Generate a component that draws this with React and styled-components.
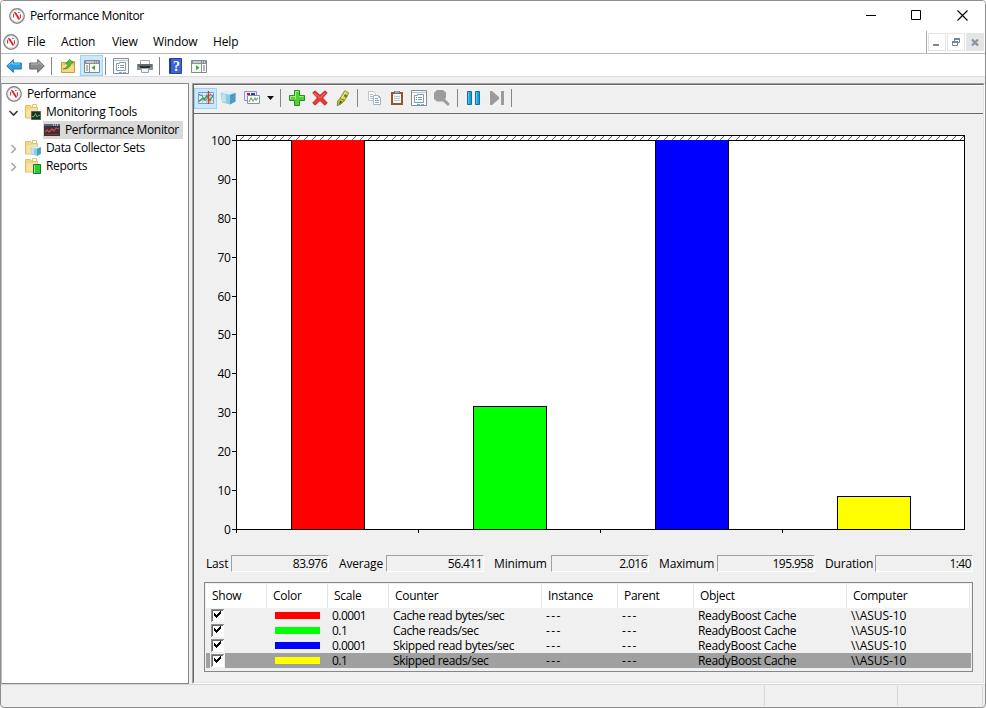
import React from "react";
import styled, { createGlobalStyle } from "styled-components";

const GlobalStyle = createGlobalStyle`
  * { box-sizing: border-box; }
  body {
    margin: 0;
    background: #fff;
    overflow: hidden;
  }
`;

const Window = styled.div`
  width: 986px;
  height: 708px;
  display: flex;
  flex-direction: column;
  border: 1px solid #8e8e90;
  border-radius: 4px;
  background: #f0f0f0;
  color: #000;
  font: 12px/18px "Open Sans", "Noto Sans", sans-serif;
  letter-spacing: -0.16px;
  overflow: hidden;
  white-space: nowrap;
  cursor: default;
`;

const TitleBar = styled.header`
  display: flex;
  align-items: center;
  height: 30px;
  padding-left: 8px;
  background: #fff;
`;

const Title = styled.span`
  flex: 1;
  margin-left: 5px;
  letter-spacing: -0.35px;
`;

const WindowControl = styled.div`
  display: flex;
  align-items: center;
  justify-content: center;
  width: 45px;
  height: 30px;
  padding: 0 ${(p) => p.$shift || 0}px 2px 0;
`;

const MenuBar = styled.nav`
  display: flex;
  align-items: center;
  height: 23px;
  padding-left: 2px;
  background: #fff;
  border-bottom: 1px solid #b9b9c1;
`;

const MenuItem = styled.span`
  width: ${(p) => p.$width}px;
`;

const MdiControls = styled.div`
  display: flex;
  align-items: center;
  gap: 1px;
  height: 22px;
  margin-left: auto;
  padding: 0 1px;
  border-left: 1px solid #a9a9ae;
`;

const MdiButton = styled.div`
  width: 18px;
  height: 18px;
  border: 1px solid #e5e5e5;
  background: ${(p) => (p.$filled ? "#e5e5e5" : "#fff")};
  svg { display: block; }
`;

const MainToolbar = styled.div`
  display: flex;
  align-items: center;
  height: 23px;
  padding: 1px 0 0 5px;
  background: #fff;
  border-bottom: 1px solid #dcdcdc;
`;

const ToolButton = styled.div`
  display: flex;
  align-items: center;
  justify-content: center;
  width: ${(p) => (p.$active ? 23 : 16)}px;
  height: ${(p) => (p.$active ? 21 : 18)}px;
  margin-left: ${(p) => p.$gap || 0}px;
  flex: none;
  ${(p) => p.$active && "background: #cce8ff; border: 1px solid #99d1ff;"}
`;

const Separator = styled.div`
  width: 1px;
  height: 18px;
  margin-left: ${(p) => p.$gap}px;
  background: #858585;
`;

const Body = styled.div`
  display: flex;
  height: 607px;
  padding-top: 6px;
`;

const Tree = styled.aside`
  width: 188px;
  height: 601px;
  padding-top: 1px;
  background: #fff;
  border: 1px solid #828790;
  border-left-color: #b9bcc1;
`;

const TreeRow = styled.div`
  display: flex;
  align-items: center;
  height: 18px;
  padding-left: ${(p) => p.$indent}px;
`;

const TreeLabel = styled.div`
  display: flex;
  align-items: center;
  gap: 5px;
  height: 18px;
  padding: 0 4px 0 1px;
  letter-spacing: ${(p) => p.$spacing || -0.35}px;
  background: ${(p) => (p.$selected ? "#d9d9d9" : "transparent")};
`;

const Expander = styled.div`
  display: flex;
  justify-content: center;
  width: 10px;
  margin-right: 6px;
`;

const Pane = styled.main`
  display: flex;
  flex-direction: column;
  width: 793px;
  height: 601px;
  margin-left: 3px;
  border: 1px solid;
  border-color: #a0a0a0 #fff #fff #a0a0a0;
`;

const PaneInner = styled.div`
  flex: 1;
  border: 1px solid;
  border-color: #696969 #e3e3e3 #e3e3e3 #696969;
`;

const PaneToolbar = styled.div`
  display: flex;
  align-items: center;
  height: 29px;
  padding-bottom: 3px;
  border-top: 1px solid #fff;
  border-bottom: 1px solid #696969;
`;

const ChartSvg = styled.svg`
  display: block;
  text {
    font-size: 12px;
    text-anchor: end;
    letter-spacing: -0.4px;
  }
`;

const Stats = styled.div`
  display: flex;
  align-items: center;
  height: 17px;
  padding-left: 12px;
`;

const StatLabel = styled.span`
  width: ${(p) => p.$width}px;
`;

const StatValue = styled.span`
  width: 98px;
  height: 17px;
  margin-right: ${(p) => p.$after}px;
  padding-right: 1px;
  line-height: 16px;
  text-align: right;
  letter-spacing: -0.55px;
  border: 1px solid;
  border-color: #a0a0a0 #fff #fff #a0a0a0;
`;

const Counters = styled.div`
  width: 769px;
  height: 90px;
  margin: 10px 0 0 10px;
  padding: 1px;
  border: 1px solid #828790;
`;

const columns = "61px 61px 61px 153px 76px 76px 153px 123px";

const CounterHeader = styled.div`
  display: grid;
  grid-template-columns: ${columns};
  width: 765px;
  height: 24px;
  background: #fff;
`;

const HeaderCell = styled.div`
  padding-left: 6px;
  line-height: 24px;
  letter-spacing: -0.28px;
  border-right: 1px solid #e5e5e5;
`;

const CounterRow = styled.div`
  display: grid;
  grid-template-columns: ${columns};
  align-items: center;
  width: 765px;
  height: 15px;
  line-height: 15px;
  background: ${(p) => (p.$selected ? "#a0a0a0" : "transparent")};
`;

const Cell = styled.div`
  padding-left: 4px;
  letter-spacing: ${(p) => p.$spacing || 0}px;
`;

const CheckCell = styled.div`
  display: flex;
  width: 15px;
  height: 15px;
  margin-left: 4px;
  background: #f0f0f0;
`;

const Swatch = styled.div`
  width: 45px;
  height: 7px;
  margin-left: 8px;
  background: ${(p) => p.$color};
`;

const StatusBar = styled.footer`
  display: flex;
  height: 23px;
  padding-top: 1px;
  border-top: 1px solid #d7d7d7;
`;

const StatusCell = styled.div`
  width: ${(p) => p.$width}px;
  height: 20px;
  border-right: 1px solid #d7d7d7;
`;

/* icons */

const Svg = ({ w = 16, h = 16, children }) => (
  <svg width={w} height={h} viewBox={`0 0 ${w} ${h}`} fill="none">
    {children}
  </svg>
);

const GaugeIcon = () => (
  <Svg>
    <circle cx="8" cy="8" r="7.2" fill="#fff" stroke="#868686" strokeWidth="1.4" />
    <circle cx="8" cy="8" r="5.9" stroke="#d9d9d9" strokeWidth=".8" />
    <path d="M4.6 9.5V5.8M11.4 6.2v4" stroke="#c33a3a" strokeWidth="1.1" />
    <path d="M5.2 4.2l1.7.5 3.8 6.2-1 .6z" fill="#e60f0f" stroke="#d01010" strokeWidth=".6" />
    <path d="M9 4.4h1.6" stroke="#8b4b4b" />
  </Svg>
);

const ArrowIcon = ({ right }) => (
  <Svg>
    <g transform={right ? "translate(16 0) scale(-1 1)" : undefined}>
      <path
        d="M.7 8L7.3 1.6V5h8v6h-8v3.4z"
        fill={right ? "#8c8c8c" : "#2f9fe3"}
        stroke={right ? "#686868" : "#1a75b5"}
      />
      <path d="M2.5 7.6L6.5 4v2H14" stroke={right ? "#b5b5b5" : "#7cd0fa"} />
    </g>
  </Svg>
);

const FolderBase = () => (
  <>
    <path d="M.5 1.5h5l1 2h6v10.5H.5z" fill="#f3d583" stroke="#e3bd62" />
    <path d="M7.5.5h4v3h-4z" fill="#fff" stroke="#dcc17a" />
    <path d="M1.5 5.5h4l1-1h6V13.5h-11z" fill="#f9e2a2" />
  </>
);

const UpFolderIcon = () => (
  <Svg>
    <path d="M1.5 4.5h5l1-1h7v11h-13z" fill="#f0c65f" stroke="#cb9a3d" />
    <path d="M2 7h12v7H2z" fill="#f7d888" />
    <path d="M3 11C6 10.5 7.5 8.5 8 5.8H5.6L9.5 1.3l4 3.5-2.5.4C10.5 9 7 11.5 3 11z" fill="#55b83a" stroke="#2f8d23" strokeWidth=".6" />
  </Svg>
);

const PanelIcon = ({ right }) => (
  <Svg>
    <path d="M.5 2.5h15v12H.5z" fill="#f6f8f9" stroke="#85898c" />
    <path d="M1 3h14v3H1z" fill="#8a9197" />
    <path d="M2 4h8" stroke="#fff" />
    <path d="M11 4h1M13 4h1" stroke="#fff" />
    <path d={right ? "M10.5 6v8" : "M5.5 6v8"} stroke="#8d9194" />
    <path d={right ? "M12 8h2M12 10h2M12 12h2" : "M2 8h2M2 10h2M2 12h2"} stroke="#777" />
    <path d={right ? "M5 7.3v5L8.5 9.8z" : "M11 7.3v5L7.5 9.8z"} fill="#3ba52d" />
  </Svg>
);

const PropertiesIcon = () => (
  <Svg>
    <path d="M.5.5h15v15H.5z" fill="#f7fafc" stroke="#848d94" />
    <path d="M1 2.5h14" stroke="#bac3ca" />
    <path d="M3.5 5.5h3v-1h6v8h-9z" fill="#fff" stroke="#879cab" />
    <path d="M5 7.5h1M5 9.5h1" stroke="#1da4e5" />
    <path d="M7 7.5h4M7 9.5h4" stroke="#8797a3" />
    <path d="M6 14.5h3" stroke="#20cdf3" />
    <path d="M10 14.5h3" stroke="#a2abb2" />
  </Svg>
);

const PrinterIcon = () => (
  <Svg>
    <path d="M3.5 2.5h9v4h-9z" fill="#fff" stroke="#a5a9ac" />
    <path d="M0 6h16v6H0z" fill="#8e9295" />
    <path d="M1 6h14v3H1z" fill="#65696c" />
    <path d="M3 8h10v2H3z" fill="#2c2f31" />
    <path d="M4.5 10.5h7v4h-7z" fill="#e9f6fc" stroke="#9ba2a6" />
  </Svg>
);

const HelpIcon = () => (
  <Svg>
    <path d="M2.5.5h12v15h-12z" fill="#3f63cf" stroke="#2546a8" />
    <path d="M3.5 1v14" stroke="#18338f" />
    <text x="9.5" y="13" fill="#fff" fontSize="14" fontWeight="700" fontFamily="Liberation Serif" textAnchor="middle">?</text>
  </Svg>
);

const LineChartIcon = () => (
  <Svg>
    <path d="M.5 2.5h15v11H.5z" fill="#e3eefb" stroke="#7e9cc8" />
    <path d="M1 5.5h14M1 10.5h14M4.5 3v10M8.5 3v10M12.5 3v10" stroke="#b2c6df" />
    <path d="M1 4.5l3 1 3 5 3-3 2-3 3 1" stroke="#536ba8" />
    <path d="M1 11.5l3-3 2 1 3-4 3 5 3-5" stroke="#31a438" strokeWidth="1.3" />
    <path d="M10.5 1v13" stroke="#e9301e" strokeWidth="1.4" />
  </Svg>
);

const CubeShape = () => (
  <>
    <path d="M.5 3l5-1.5L15.5 3v8.5L10 14.5 2 12.5z" fill="#8fcbe1" />
    <path d="M.5 3l5-1.5L15.5 3 10 4.8z" fill="#dcf1f8" />
    <path d="M10 4.8L15.5 3v8.5L10 14.5z" fill="#4d9cc0" />
    <path d="M1.5 4l4 .6.5 8-4-1z" fill="#bfe4f0" />
  </>
);

const CubeIcon = () => <Svg><CubeShape /></Svg>;

const GalleryIcon = () => (
  <Svg>
    <path d="M.5 1.5h12v9H.5z" fill="#e9edff" stroke="#9292be" />
    <path d="M3 3h3v2H3z" fill="#d90f27" />
    <path d="M7 3h4v2H7z" fill="#2b3f9c" />
    <path d="M3.5 5.5h12v8h-12z" fill="#fff" stroke="#878eb5" />
    <path d="M5 12l2-4 2 3 2-3 1 2 2-2" stroke="#6fb05f" strokeWidth="1.2" />
  </Svg>
);

const PlusIcon = () => (
  <Svg>
    <path d="M5.5.5h5v5h5v5h-5v5h-5v-5h-5v-5h5z" fill="#55cf35" stroke="#26901c" />
    <path d="M6.5 9V1.5h3M1.5 9V6.5h5M10 6.5h4.5" stroke="#a3ec82" />
  </Svg>
);

const DeleteIcon = () => (
  <Svg>
    <path d="M.7 2.8L3 .8l5 4.5 5-4.5 2.2 2L10.6 8l4.7 5-2.5 2.2L8 10.6l-5 4.6-2.3-2.3L5.4 8z" fill="#e63932" stroke="#b51d21" strokeWidth=".8" />
    <path d="M2 3l6 5 4.7-4.8" stroke="#f37a6c" />
  </Svg>
);

const HighlighterIcon = () => (
  <Svg>
    <path d="M9.7.6l4.1 2.4-4.3 7.6-4.3-2.4z" fill="#e8d426" stroke="#7b8424" strokeWidth=".8" />
    <path d="M9 3.6l3.6 2.1-1.2 2L7.7 5.6z" fill="#45799d" />
    <path d="M10.5 2.2L6.3 9" stroke="#fff68a" />
    <path d="M5.2 8.2l4.3 2.4L6 14l-3.8 1.8L2.8 11z" fill="#d8c323" stroke="#68702e" strokeWidth=".8" />
    <path d="M5 10.6l2.4 1.4L4 14.4z" fill="#285d77" />
  </Svg>
);

const CopyIcon = () => (
  <Svg>
    <path d="M1.5 1.5h5l2 2v7h-7z" fill="#fff" stroke="#c0c4c7" />
    <path d="M3 4.5h3M3 6.5h4M3 8.5h4" stroke="#9cbbd4" />
    <path d="M6.5 5.5h5l2 2v7h-7z" fill="#fff" stroke="#adb1b5" />
    <path d="M8 8.5h3M8 10.5h4M8 12.5h4" stroke="#7ba5c8" />
    <path d="M11.5 5.5v2h2" stroke="#adb1b5" />
  </Svg>
);

const ClipboardIcon = () => (
  <Svg>
    <path d="M2 2h12v13H2z" fill="#9b5422" />
    <path d="M4 4h8v9H4z" fill="#f9fcff" />
    <path d="M5 6.5h6M5 8.5h6M5 10.5h6" stroke="#b2c8d6" />
    <path d="M5 1h6v3H5z" fill="#68747b" />
    <path d="M6 2h4" stroke="#d3dadd" />
  </Svg>
);

const MagnifierIcon = () => (
  <Svg>
    <path d="M3 0h6l3 2.5v5L11 9l4.5 4.5v1L14 16l-5-4.5H3L0 9V3z" fill="#9c9c9c" />
  </Svg>
);

const PauseIcon = () => (
  <Svg>
    <path d="M1.5 1.5h4v13h-4zM9.5 1.5h4v13h-4z" fill="#259edc" stroke="#126ca9" />
    <path d="M2.5 2v12M10.5 2v12" stroke="#59c4ef" />
  </Svg>
);

const StepIcon = () => (
  <Svg>
    <path d="M1 1h2l7 6v2l-7 6H1zM12 1h3v14h-3z" fill="#9b9b9b" />
  </Svg>
);

const CaretIcon = () => <Svg w={7} h={4}><path d="M0 0h7L3.5 4z" fill="#111" /></Svg>;

const ToolsFolderIcon = () => (
  <Svg>
    <FolderBase />
    <path d="M6.5 7.5h9v8h-9z" fill="#222e2b" stroke="#5b6062" />
    <path d="M7 12.5h2l1.5-3 1.5 3.5 1.5-1.5H15" stroke="#38cf38" />
  </Svg>
);

const DataFolderIcon = () => (
  <Svg>
    <FolderBase />
    <g transform="translate(5 5) scale(.7 .76)"><CubeShape /></g>
  </Svg>
);

const ReportsFolderIcon = () => (
  <Svg>
    <FolderBase />
    <path d="M8.5 6.5h7v9h-7z" fill="#2bcc35" stroke="#147a23" />
    <path d="M9.5 7v8" stroke="#7bf080" />
  </Svg>
);

const MonitorIcon = () => (
  <Svg>
    <path d="M0 2h16v12H0z" fill="#3b3033" />
    <path d="M0 2h16v2H0z" fill="#56677d" />
    <path d="M9 3h1M11 3h1M13 3h1" stroke="#fff" />
    <path d="M1 10l2-2 2 2 3-3 2 2 2-3 3 1" stroke="#d0474a" strokeWidth="1.3" />
    <path d="M1 12.5h14" stroke="#793b40" />
  </Svg>
);

const Chevron = ({ open }) => (
  <Svg w={10} h={12}>
    {open ? (
      <path d="M1.5 5l4 4 4-4" stroke="#404040" strokeWidth="1.7" />
    ) : (
      <path d="M3.5 3l4 4-4 4" stroke="#a6a6a6" strokeWidth="1.5" />
    )}
  </Svg>
);

const Checkbox = () => (
  <svg width="15" height="15" viewBox="0 0 15 15" shapeRendering="crispEdges">
    <path d="M1 1h13v13H1z" fill="#fff" />
    <path d="M1.5 14V1.5H14" stroke="#909090" fill="none" />
    <path d="M2.5 13V2.5H13" stroke="#696969" fill="none" />
    <path d="M4 5v3h1v1h1v1h1V9h1V8h1V7h1V6h1V3h-1v1H9v1H8v1H7v1H6V6H5V5z" fill="#000" />
  </svg>
);

/* chart */

const counters = [
  { color: "#ff0000", scale: "0.0001", name: "Cache read bytes/sec", value: 100 },
  { color: "#00ff00", scale: "0.1", name: "Cache reads/sec", value: 31.6 },
  { color: "#0000ff", scale: "0.0001", name: "Skipped read bytes/sec", value: 100 },
  { color: "#ffff00", scale: "0.1", name: "Skipped reads/sec", value: 8.5, selected: true },
];

const LEFT = 42.5;
const BASE = 415.5;
const SLOT = 182;
const toY = (v) => Math.round(BASE - v * 3.89 - 0.51) + 0.5;

function Bar({ index, color, value }) {
  const x = LEFT + index * SLOT + 55;
  const y = toY(value);
  return (
    <>
      <rect x={x} y={y} width="73" height={BASE - y} fill={color} />
      {/* a full bar runs through the top line */}
      {value >= 100 && <path d={`M${x + 0.5} ${y}h72`} stroke={color} />}
    </>
  );
}

function Chart() {
  const labels = [0, 10, 20, 30, 40, 50, 60, 70, 80, 90, 100];
  return (
    <ChartSvg width="788" height="441" viewBox="0 0 788 441">
      <g shapeRendering="crispEdges" stroke="#000">
        <rect x={LEFT} y="21.5" width="728" height="394" fill="#fff" />
        <path d={`M${LEFT} 26.5h728`} />
        {counters.map((c, i) => (
          <Bar key={c.name} index={i} color={c.color} value={c.value} />
        ))}
        {[0, 1, 2, 3].map((i) => (
          <path key={i} d={`M${LEFT + i * SLOT} ${BASE}v3.5`} />
        ))}
        {labels.map((v) => (
          <path key={v} d={`M38 ${toY(v)}h4`} />
        ))}
      </g>
      <g stroke="#555" strokeWidth=".9">
        {Array.from({ length: 91 }, (_, i) => (
          <path key={i} d={`M${46 + i * 8} 26l4-4`} />
        ))}
      </g>
      {labels.map((v) => (
        <text key={v} x="36.5" y={toY(v) + 4.5}>{v}</text>
      ))}
    </ChartSvg>
  );
}

const stats = [
  { label: "Last", value: "83.976", width: 25, after: 10 },
  { label: "Average", value: "56.411", width: 47, after: 10 },
  { label: "Minimum", value: "2.016", width: 57, after: 10 },
  { label: "Maximum", value: "195.958", width: 58, after: 10 },
  { label: "Duration", value: "1:40", width: 50, after: 0 },
];

function CounterTable() {
  return (
    <Counters>
      <CounterHeader>
        {["Show", "Color", "Scale", "Counter", "Instance", "Parent", "Object", "Computer"].map((h) => (
          <HeaderCell key={h}>{h}</HeaderCell>
        ))}
      </CounterHeader>
      {counters.map((c) => (
        <CounterRow key={c.name} $selected={c.selected}>
          <CheckCell><Checkbox /></CheckCell>
          <Swatch $color={c.color} />
          <Cell $spacing={-0.55}>{c.scale}</Cell>
          <Cell $spacing={-0.37}>{c.name}</Cell>
          <Cell $spacing={1.4}>---</Cell>
          <Cell $spacing={1.4}>---</Cell>
          <Cell $spacing={-0.34}>ReadyBoost Cache</Cell>
          <Cell $spacing={-0.05}>{"\\\\ASUS-10"}</Cell>
        </CounterRow>
      ))}
    </Counters>
  );
}

export default function App() {
  return (
    <>
      <GlobalStyle />
      <Window>
        <TitleBar>
          <GaugeIcon />
          <Title>Performance Monitor</Title>
          <WindowControl $shift={3}>
            <Svg w={10} h={11}><path d="M0 5.5h10" stroke="#000" /></Svg>
          </WindowControl>
          <WindowControl $shift={3}>
            <Svg w={10} h={10}><path d="M.5.5h9v9h-9z" stroke="#000" /></Svg>
          </WindowControl>
          <WindowControl>
            <Svg w={11} h={11}><path d="M.5.5l10 10M10.5.5l-10 10" stroke="#000" strokeWidth="1.1" /></Svg>
          </WindowControl>
        </TitleBar>
        <MenuBar>
          <GaugeIcon />
          <MenuItem $width={8} />
          <MenuItem $width={34}>File</MenuItem>
          <MenuItem $width={51}>Action</MenuItem>
          <MenuItem $width={41}>View</MenuItem>
          <MenuItem $width={60}>Window</MenuItem>
          <MenuItem $width={40}>Help</MenuItem>
          <MdiControls>
            <MdiButton><Svg><path d="M4 11h6" stroke="#75869a" strokeWidth="2" /></Svg></MdiButton>
            <MdiButton>
              <Svg>
                <path d="M6.5 7V4.5h5v4H10" stroke="#75869a" />
                <path d="M6 5h6M4 8h6" stroke="#75869a" strokeWidth="2" />
                <path d="M4.5 7.5h5v4h-5z" stroke="#75869a" />
              </Svg>
            </MdiButton>
            <MdiButton $filled>
              <Svg><path d="M5 5.5l6 6M11 5.5l-6 6" stroke="#8493a5" strokeWidth="2.2" /></Svg>
            </MdiButton>
          </MdiControls>
        </MenuBar>
        <MainToolbar>
          <ToolButton><ArrowIcon /></ToolButton>
          <ToolButton $gap={7}><ArrowIcon right /></ToolButton>
          <Separator $gap={6} />
          <ToolButton $gap={8}><UpFolderIcon /></ToolButton>
          <ToolButton $gap={4} $active><PanelIcon /></ToolButton>
          <Separator $gap={2} />
          <ToolButton $gap={7}><PropertiesIcon /></ToolButton>
          <ToolButton $gap={8}><PrinterIcon /></ToolButton>
          <Separator $gap={6} />
          <ToolButton $gap={7}><HelpIcon /></ToolButton>
          <ToolButton $gap={8}><PanelIcon right /></ToolButton>
        </MainToolbar>
        <Body>
          <Tree>
            <TreeRow $indent={3}>
              <TreeLabel><GaugeIcon />Performance</TreeLabel>
            </TreeRow>
            <TreeRow $indent={6}>
              <Expander><Chevron open /></Expander>
              <TreeLabel $spacing={-0.22}><ToolsFolderIcon />Monitoring Tools</TreeLabel>
            </TreeRow>
            <TreeRow $indent={41}>
              <TreeLabel $selected><MonitorIcon />Performance Monitor</TreeLabel>
            </TreeRow>
            <TreeRow $indent={6}>
              <Expander><Chevron /></Expander>
              <TreeLabel><DataFolderIcon />Data Collector Sets</TreeLabel>
            </TreeRow>
            <TreeRow $indent={6}>
              <Expander><Chevron /></Expander>
              <TreeLabel><ReportsFolderIcon />Reports</TreeLabel>
            </TreeRow>
          </Tree>
          <Pane>
            <PaneInner>
              <PaneToolbar>
                <ToolButton $active><LineChartIcon /></ToolButton>
                <ToolButton $gap={3}><CubeIcon /></ToolButton>
                <ToolButton $gap={8}><GalleryIcon /></ToolButton>
                <ToolButton $gap={2}><CaretIcon /></ToolButton>
                <Separator $gap={2} />
                <ToolButton $gap={8}><PlusIcon /></ToolButton>
                <ToolButton $gap={7}><DeleteIcon /></ToolButton>
                <ToolButton $gap={7}><HighlighterIcon /></ToolButton>
                <Separator $gap={6} />
                <ToolButton $gap={9}><CopyIcon /></ToolButton>
                <ToolButton $gap={6}><ClipboardIcon /></ToolButton>
                <ToolButton $gap={6}><PropertiesIcon /></ToolButton>
                <ToolButton $gap={7}><MagnifierIcon /></ToolButton>
                <Separator $gap={7} />
                <ToolButton $gap={8}><PauseIcon /></ToolButton>
                <ToolButton $gap={7}><StepIcon /></ToolButton>
                <Separator $gap={6} />
              </PaneToolbar>
              <Chart />
              <Stats>
                {stats.map((s) => (
                  <React.Fragment key={s.label}>
                    <StatLabel $width={s.width}>{s.label}</StatLabel>
                    <StatValue $after={s.after}>{s.value}</StatValue>
                  </React.Fragment>
                ))}
              </Stats>
              <CounterTable />
            </PaneInner>
          </Pane>
        </Body>
        <StatusBar>
          <StatusCell $width={764} />
          <StatusCell $width={133} />
          <StatusCell $width={85} />
        </StatusBar>
      </Window>
    </>
  );
}
